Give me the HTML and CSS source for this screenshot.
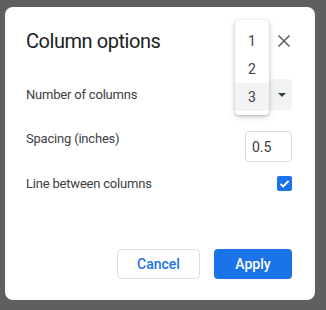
FILE: index.html
```html
<!DOCTYPE html>
<html lang="en">
<head>
  <meta charset="UTF-8" />
  <title>Column options</title>
  <link rel="stylesheet" href="styles.css">
</head>
<body>
  <div class="dialog" role="dialog" aria-labelledby="dlgTitle">
    <div class="dialog-header">
      <h2 id="dlgTitle">Column options</h2>
      <button class="close-btn" aria-label="Close">
        <svg width="14" height="14" viewBox="0 0 14 14"><path d="M1.5 1.5 L12.5 12.5 M12.5 1.5 L1.5 12.5" stroke="#5f6368" stroke-width="1.6" fill="none"/></svg>
      </button>
    </div>

    <div class="row row-columns">
      <span class="label">Number of columns</span>
      <!-- value is covered by the open menu below -->
      <div class="select-box" aria-label="3">
        <span class="arrow"></span>
      </div>
    </div>

    <div class="row row-spacing">
      <span class="label">Spacing (inches)</span>
      <div class="text-input">0.5</div>
    </div>

    <div class="row row-line">
      <span class="label">Line between columns</span>
      <span class="checkbox">
        <svg width="15" height="15" viewBox="0 0 15 15"><path d="M3.5 7.8 L6.2 10.4 L11.6 4.8" stroke="#fff" stroke-width="1.8" fill="none"/></svg>
      </span>
    </div>

    <div class="btn-row">
      <button class="btn btn-cancel">Cancel</button>
      <button class="btn btn-apply">Apply</button>
    </div>

    <!-- open dropdown of the columns select -->
    <ul class="menu">
      <li>1</li>
      <li>2</li>
      <li class="selected">3</li>
    </ul>
  </div>
</body>
</html>
```

FILE: styles.css
```css
body {
  margin: 0;
  background: #5f5f60;
  font-family: Roboto, "Liberation Sans", Arial, sans-serif;
  width: 326px;
  height: 310px;
  overflow: hidden;
}
.dialog {
  position: relative;
  box-sizing: border-box;
  margin: 7px 0 0 5px;
  width: 310px;
  height: 293px;
  background: #fff;
  border-radius: 8px;
  padding: 22px 23px 0 21px;
  display: flex;
  flex-direction: column;
}
.dialog-header {
  display: flex;
  justify-content: space-between;
  align-items: center;
  height: 24px;
}
.dialog-header h2 {
  margin: 0;
  font-size: 20px;
  letter-spacing: -0.45px;
  font-weight: 400;
  color: #202124;
}
.close-btn {
  background: transparent;
  border: none;
  padding: 0;
  width: 14px;
  height: 14px;
  margin-right: 1px;
  display: flex;
}
.row {
  display: flex;
  justify-content: space-between;
  align-items: center;
}
.label {
  font-size: 13px;
  letter-spacing: -0.2px;
  color: #3c4043;
}
.row-columns {
  margin-top: 26px;
}
.select-box {
  width: 56px;
  height: 31px;
  background: #f1f3f4;
  border-radius: 4px;
  display: flex;
  align-items: center;
  justify-content: flex-end;
  padding: 0 6px;
  box-sizing: border-box;
}
.arrow {
  width: 0;
  height: 0;
  border-left: 4px solid transparent;
  border-right: 4px solid transparent;
  border-top: 4px solid #3c4043;
}
.row-spacing {
  margin-top: 21px;
  align-items: flex-start;
}
.text-input {
  box-sizing: border-box;
  width: 47px;
  height: 31px;
  border: 1px solid #dadce0;
  border-radius: 4px;
  padding: 0 6px;
  display: flex;
  align-items: center;
  font-size: 14px;
  color: #3c4043;
}
.row-line {
  margin-top: 14px;
}
.checkbox {
  width: 15px;
  height: 15px;
  background: #1a73e8;
  border-radius: 2px;
  display: flex;
}
.btn-row {
  margin-top: 58px;
  display: flex;
  justify-content: flex-end;
  gap: 14px;
}
.btn {
  box-sizing: border-box;
  height: 30px;
  border-radius: 4px;
  font-family: inherit;
  font-size: 14px;
  font-weight: 500;
}
.btn-cancel {
  width: 83px;
  background: #fff;
  border: 1px solid #dadce0;
  color: #1a73e8;
}
.btn-apply {
  width: 78px;
  background: #1a73e8;
  border: none;
  color: #fff;
}
.menu {
  position: absolute;
  left: 230px;
  top: 13px;
  width: 34px;
  margin: 0;
  padding: 7px 0 4px;
  list-style: none;
  background: #fff;
  border-radius: 4px;
  box-shadow: 0 1px 3px rgba(60, 64, 67, 0.3), 0 2px 6px 1px rgba(60, 64, 67, 0.12);
}
.menu li {
  height: 28px;
  line-height: 28px;
  text-align: center;
  font-size: 14px;
  color: #3c4043;
}
.menu li.selected {
  background: #f1f3f4;
}
```
